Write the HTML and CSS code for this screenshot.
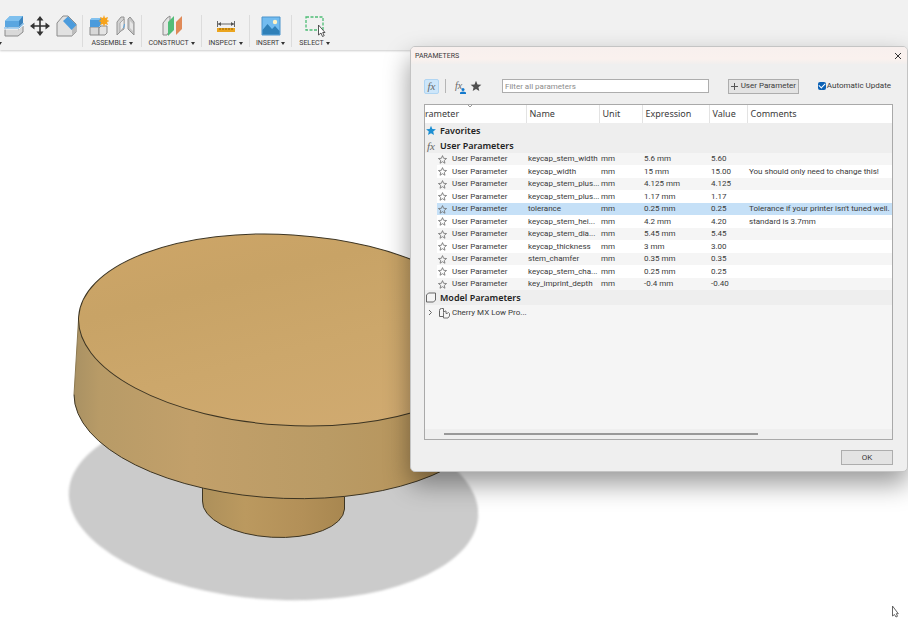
FILE: index.html
```html
<!DOCTYPE html>
<html lang="en">
<head>
<meta charset="utf-8">
<title>Parameters</title>
<link rel="stylesheet" href="styles.css">
</head>
<body>
<svg width="0" height="0" class="defs" aria-hidden="true">
  <symbol id="star" viewBox="0 0 12 12"><path d="M6 .8 7.5 4.4 11.4 4.7 8.4 7.2 9.3 11 6 8.9 2.7 11 3.6 7.2 .6 4.7 4.5 4.4Z"/></symbol>
</svg>

<header class="ribbon">
  <section class="group modify">
    <div class="icons">
      <svg width="20" height="22" viewBox="0 0 20 22"><path d="M1 14 6 11H19V17L14 21H1Z" fill="#d9d9d9" stroke="#8b8b8b"/><path d="M14 15 19 11" stroke="#8b8b8b"/><path d="M1 6 6 1H19V8L15 12H1Z" fill="#5aa6e0"/><path d="M1 6 6 1H19L15 6Z" fill="#7fc0ee"/><path d="M15 6 19 1V8L15 12Z" fill="#3d84bd"/><path d="M0 13.500H15L20 9" fill="none" stroke="#fff" stroke-width="2"/><path d="M0 13H15L20 8.500" fill="none" stroke="#5aa6e0"/></svg>
      <svg width="20" height="20" viewBox="0 0 20 20"><path d="M10 3V17M3 10H17" stroke="#333" stroke-width="1.600"/><path d="M10 0 13.500 4.500H6.500ZM10 20 13.500 15.500H6.500ZM0 10 4.500 6.500V13.500ZM20 10 15.500 6.500V13.500Z" fill="#333"/></svg>
      <svg width="22" height="22" viewBox="0 0 22 22"><path d="M1 8 7 1H12L20 9V17L16 21H1Z" fill="#e1e1e1" stroke="#8b8b8b"/><path d="M16 14V21L20 17V10Z" fill="#bcbcbc"/><path d="M7 6 12 1.500 20.500 10 15.500 15Z" fill="#4b9bdc"/></svg>
    </div>
    <button class="menu" aria-label="Modify"><i></i></button>
  </section>
  <section class="group">
    <div class="icons wide">
      <svg width="20" height="22" viewBox="0 0 20 22"><path d="M1 12H10V20H1Z" fill="#d8d8d8" stroke="#8b8b8b"/><path d="M10 13 12 11H18V18L16 20H10Z" fill="#e4e4e4" stroke="#8b8b8b"/><path d="M1 5 3 3H12V10L10 12H1Z" fill="#4b9bdc"/><path d="M1 5 3 3H12L10 5Z" fill="#83c2ef"/><path d="M15 0 16 3 19 2 18 5 20.500 6 18 7 19 10 16 9 15 12 14 9 11 10 12 7 9.500 6 12 5 11 2 14 3Z" fill="#f7a31b"/></svg>
      <svg width="20" height="20" viewBox="0 0 20 20"><path d="M1 6 5 1H8V13L5 15 1 19Z" fill="#d2d2d2" stroke="#929292"/><path d="M4 7 8 3V11L4 16Z" fill="#ececec" stroke="#929292" stroke-width=".7"/><path d="M12 3 14 1 18 6V19L14 15 12 13Z" fill="#c6c6c6" stroke="#929292"/><path d="M14 5 17 8V15L14 12Z" fill="#e6e6e6"/><path d="M8.500 8 7.500 12" stroke="#5aa6e0"/></svg>
    </div>
    <button class="menu">ASSEMBLE<i></i></button>
  </section>
  <section class="group">
    <div class="icons">
      <svg width="20" height="22" viewBox="0 0 20 22"><path d="M1 8 5 3 8 1V15L5 20H1Z" fill="#e5e5e5" stroke="#8d8d8d"/><path d="M6 7 12 1V15L6 21Z" fill="#52bd78"/><path d="M14 7 20 1V14L14 20Z" fill="#e08a58"/></svg>
    </div>
    <button class="menu">CONSTRUCT<i></i></button>
  </section>
  <section class="group">
    <div class="icons">
      <svg width="20" height="14" viewBox="0 0 20 14"><path d="M1.500 2V8M18.500 2V8M2 5H18" stroke="#666" fill="none"/><path d="M2 5 5 3V7ZM18 5 15 3V7Z" fill="#555"/><path d="M1 9H19V13H1Z" fill="#eba51f"/><path d="M4 9V11M7 9V11M10 9V11M13 9V11M16 9V11" stroke="#966000"/></svg>
    </div>
    <button class="menu">INSPECT<i></i></button>
  </section>
  <section class="group">
    <div class="icons">
      <svg width="20" height="20" viewBox="0 0 20 20"><path d="M1 1H19V19H1Z" fill="#72bcf0" stroke="#4a93cb"/><path d="M1.500 14 6.500 8 11 13 14 10 18.500 15V18.500H1.500Z" fill="#2f80b8"/><circle cx="14" cy="6" r="2.200" fill="#fff3c4"/></svg>
    </div>
    <button class="menu">INSERT<i></i></button>
  </section>
  <section class="group last">
    <div class="icons">
      <svg width="22" height="22" viewBox="0 0 22 22"><path d="M2 2H19V15H2Z" fill="none" stroke="#4dbd76" stroke-width="1.300" stroke-dasharray="3 1.500"/><path d="M14.500 10V20L17 18 18.500 21.500 20.200 20.700 18.700 17.500H21Z" fill="#fff" stroke="#444" stroke-width=".9"/></svg>
    </div>
    <button class="menu">SELECT<i></i></button>
  </section>
</header>

<main class="viewport">
  <svg class="model" viewBox="0 50 908 575">
    <defs>
      <linearGradient id="top" x1="0" y1="0" x2=".7" y2="1"><stop offset="0" stop-color="#cfa668"/><stop offset=".35" stop-color="#c8a366"/><stop offset=".65" stop-color="#cca76b"/><stop offset="1" stop-color="#d0aa70"/></linearGradient>
      <linearGradient id="side" x1="0" x2="1"><stop offset="0" stop-color="#a99163"/><stop offset=".06" stop-color="#b89b67"/><stop offset=".28" stop-color="#c2a06a"/><stop offset=".6" stop-color="#ba9b65"/><stop offset=".85" stop-color="#b6945b"/><stop offset="1" stop-color="#a8864d"/></linearGradient>
      <linearGradient id="stem" x1="0" x2="1"><stop offset="0" stop-color="#ad905b"/><stop offset=".3" stop-color="#bb995f"/><stop offset=".7" stop-color="#b39058"/><stop offset="1" stop-color="#a88750"/></linearGradient>
      <filter id="soft"><feGaussianBlur stdDeviation="1"/></filter>
    </defs>
    <ellipse cx="273.500" cy="504" rx="205" ry="95.500" transform="rotate(3.600 273.500 504)" fill="#cbcbcb" filter="url(#soft)"/>
    <path d="M202.500 470V501A70 31.800 3.250 0 0 344.500 509V470Z" fill="url(#stem)"/>
    <path d="M202.500 486V501A70 31.800 3.250 0 0 344.500 509V490" fill="none" stroke="#3d3523"/>
    <path d="M78.500 320 74 394.600A200 91.700 2.540 0 0 493.800 409.400L495.500 340Z" fill="url(#side)"/>
    <path d="M78.500 320 74 394.600" stroke="#8d7a52"/>
    <path d="M74 394.600A200 91.700 2.540 0 0 493.800 409.400" fill="none" stroke="#3d3523"/>
    <ellipse cx="287" cy="330" rx="208.800" ry="95.300" transform="rotate(3.560 287 330)" fill="url(#top)" stroke="#3d3523"/>
    <path d="M892.500 606V616L894.500 614.500 896 617 897.500 616.300 896.300 613.700H898.300Z" fill="#fff" stroke="#555" stroke-width=".9"/>
  </svg>
</main>

<div class="dialog" role="dialog" aria-labelledby="dialog-title">
  <div class="titlebar">
    <h1 id="dialog-title">PARAMETERS</h1>
    <button class="close" aria-label="Close"><svg width="8" height="8" viewBox="0 0 8 8"><path d="M1 1 7 7M7 1 1 7" stroke="#333"/></svg></button>
  </div>
  <div class="tools">
    <button class="tool on"><span class="fx">fx</span></button>
    <span class="rule"></span>
    <button class="tool user"><span class="fx">fx</span><svg width="6" height="6" viewBox="0 0 6 6"><circle cx="3" cy="1.500" r="1.500"/><path d="M0 6V5Q0 3.500 3 3.500T6 5V6Z"/></svg></button>
    <button class="tool" aria-label="Favorites"><svg width="12" height="12" fill="#505050"><use href="#star"/></svg></button>
    <input class="filter" type="text" placeholder="Filter all parameters" aria-label="Filter all parameters">
    <button class="push add"><svg width="7" height="7" viewBox="0 0 7 7"><path d="M3.500 0V7M0 3.500H7" stroke="#555"/></svg>User Parameter</button>
    <label class="auto"><input type="checkbox" checked>Automatic Update</label>
  </div>
  <div class="list">
    <table>
      <colgroup><col class="c-indent"><col class="c-param"><col class="c-name"><col class="c-unit"><col class="c-expr"><col class="c-value"><col></colgroup>
      <thead>
        <tr><th colspan="2" class="sorted">rameter<svg width="6" height="3" viewBox="0 0 6 3"><path d="M1 0 3 2 5 0" fill="none" stroke="#999"/></svg></th><th>Name</th><th>Unit</th><th>Expression</th><th>Value</th><th>Comments</th></tr>
      </thead>
      <tbody class="heads">
        <tr><th colspan="7"><span class="cell"><svg width="12" height="11" viewBox="0 0 12 12" fill="#1d8fd2"><use href="#star"/></svg>Favorites</span></th></tr>
        <tr><th colspan="7"><span class="cell"><span class="fx">fx</span>User Parameters</span></th></tr>
      </tbody>
      <tbody class="rows">
        <tr><td></td><td><span class="cell"><svg class="fav" viewBox="0 0 12 12"><use href="#star"/></svg>User Parameter</span></td><td>keycap_stem_width</td><td>mm</td><td>5.6 mm</td><td>5.60</td><td></td></tr>
        <tr><td></td><td><span class="cell"><svg class="fav" viewBox="0 0 12 12"><use href="#star"/></svg>User Parameter</span></td><td>keycap_width</td><td>mm</td><td>15 mm</td><td>15.00</td><td>You should only need to change this!</td></tr>
        <tr><td></td><td><span class="cell"><svg class="fav" viewBox="0 0 12 12"><use href="#star"/></svg>User Parameter</span></td><td>keycap_stem_plus...</td><td>mm</td><td>4.125 mm</td><td>4.125</td><td></td></tr>
        <tr><td></td><td><span class="cell"><svg class="fav" viewBox="0 0 12 12"><use href="#star"/></svg>User Parameter</span></td><td>keycap_stem_plus...</td><td>mm</td><td>1.17 mm</td><td>1.17</td><td></td></tr>
        <tr class="selected"><td></td><td><span class="cell"><svg class="fav" viewBox="0 0 12 12"><use href="#star"/></svg>User Parameter</span></td><td>tolerance</td><td>mm</td><td>0.25 mm</td><td>0.25</td><td>Tolerance if your printer isn't tuned well.</td></tr>
        <tr><td></td><td><span class="cell"><svg class="fav" viewBox="0 0 12 12"><use href="#star"/></svg>User Parameter</span></td><td>keycap_stem_hei...</td><td>mm</td><td>4.2 mm</td><td>4.20</td><td>standard is 3.7mm</td></tr>
        <tr><td></td><td><span class="cell"><svg class="fav" viewBox="0 0 12 12"><use href="#star"/></svg>User Parameter</span></td><td>keycap_stem_dia...</td><td>mm</td><td>5.45 mm</td><td>5.45</td><td></td></tr>
        <tr><td></td><td><span class="cell"><svg class="fav" viewBox="0 0 12 12"><use href="#star"/></svg>User Parameter</span></td><td>keycap_thickness</td><td>mm</td><td>3 mm</td><td>3.00</td><td></td></tr>
        <tr><td></td><td><span class="cell"><svg class="fav" viewBox="0 0 12 12"><use href="#star"/></svg>User Parameter</span></td><td>stem_chamfer</td><td>mm</td><td>0.35 mm</td><td>0.35</td><td></td></tr>
        <tr><td></td><td><span class="cell"><svg class="fav" viewBox="0 0 12 12"><use href="#star"/></svg>User Parameter</span></td><td>keycap_stem_cha...</td><td>mm</td><td>0.25 mm</td><td>0.25</td><td></td></tr>
        <tr><td></td><td><span class="cell"><svg class="fav" viewBox="0 0 12 12"><use href="#star"/></svg>User Parameter</span></td><td>key_imprint_depth</td><td>mm</td><td>-0.4 mm</td><td>-0.40</td><td></td></tr>
      </tbody>
      <tbody class="heads">
        <tr><th colspan="7"><span class="cell"><svg width="12" height="11" viewBox="0 0 12 11"><path d="M1.500 3 3.500 1H10.500V8L8.500 10H1.500Z" fill="#f4f4f4" stroke="#666" stroke-linejoin="round"/></svg>Model Parameters</span></th></tr>
      </tbody>
      <tbody class="tree">
        <tr><td><svg class="twist" width="10" height="7" viewBox="0 0 10 7"><path d="M4 1 6.500 3.500 4 6" fill="none" stroke="#666"/></svg></td><td colspan="6"><span class="cell"><svg width="13" height="12" viewBox="0 0 13 12"><path d="M5 9.500H1.500V3.500Q1.500 1.500 3.500 1.500H5.500V5" fill="none" stroke="#666"/><path d="M5.500 11V5.500L7 4H8V6.500H9L10.500 5.500 11.500 6.500V9L10 11Z" fill="#f5f5f5" stroke="#666" stroke-width=".9"/></svg>Cherry MX Low Pro...</span></td></tr>
      </tbody>
    </table>
    <div class="scroll"><div class="thumb"></div></div>
  </div>
  <div class="footer"><button class="push ok">OK</button></div>
</div>
</body>
</html>
```
FILE: styles.css
```css
* { box-sizing: border-box; }

body {
  margin: 0;
  min-height: 100vh;
  display: flex;
  flex-direction: column;
  position: relative;
  overflow: hidden;
  background: #fff;
  color: #3a3a3a;
  font: 8px/12px Roboto, "Noto Sans", sans-serif;
}

button, input { font: inherit; color: inherit; }
button { padding: 0; border: 0; background: none; }
svg { display: block; flex: none; }
.defs { position: absolute; }

/* Ribbon */
.ribbon {
  display: grid;
  grid-template-columns: 83px 59px 60px 48px 42px 45px;
  height: 50px;
  padding-top: 15px;
  background: #f1f1f1;
  box-shadow: 0 1px 2px #ccc;
}
.group {
  display: flex;
  flex-direction: column;
  align-items: center;
  height: 32px;
  border-right: 1px solid #dcdcdc;
}
.group.last { border-right: 0; }
.icons {
  display: flex;
  flex: none;
  align-items: center;
  justify-content: center;
  gap: 6px;
  height: 22px;
}
.icons.wide { gap: 7px; }
.modify { align-items: flex-start; }
.modify .icons { padding-left: 4px; }
.modify .menu { height: 12px; }
.menu {
  display: flex;
  flex: none;
  align-items: center;
  gap: 2px;
  font-size: 7px;
  line-height: 12px;
}
.menu i {
  border: 2px solid transparent;
  border-top: 3px solid #333;
  border-bottom: 0;
}
.modify .menu i { border-left-width: 0; }

/* Viewport */
.viewport { flex: 1; }
.model { width: 100%; height: auto; }

/* Dialog */
.dialog {
  position: absolute;
  top: 46px;
  right: 0;
  width: 498px;
  border: 1px solid #c4c4c4;
  border-radius: 5px;
  background: #efefef;
  box-shadow: 0 12px 26px rgba(0, 0, 0, .4);
  overflow: hidden;
}
.titlebar {
  display: flex;
  align-items: center;
  justify-content: space-between;
  height: 17px;
  padding: 0 5px 0 4px;
  background: linear-gradient(#f8f0ee, #faf1ee 70%, #f1efee);
}
.titlebar h1 { margin: 0; font-size: 7px; font-weight: 400; }

.tools {
  display: flex;
  align-items: center;
  height: 44px;
  padding: 0 16px 0 13px;
}
.tool {
  display: flex;
  align-items: center;
  justify-content: center;
  width: 15px;
  height: 15px;
}
.tool.on { background: #cde6fa; border: 1px solid #b0d5f2; border-radius: 2px; }
.fx { font: italic 11px/12px "Liberation Serif", serif; color: #666; }
.rule { width: 1px; height: 14px; margin: 0 7px 0 6px; background: #b5b5b5; }
.user .fx { font-size: 10px; }
.user svg { align-self: flex-end; margin-left: -2px; fill: #1379cc; }
.filter {
  flex: 1;
  min-width: 0;
  height: 14px;
  margin-left: 19px;
  padding: 0 2px;
  border: 1px solid #adadad;
  background: #fff;
}
.filter::placeholder { color: #8c8c8c; opacity: 1; }
.push {
  display: flex;
  align-items: center;
  justify-content: center;
  height: 15px;
  border: 1px solid #adadad;
  background: #e3e3e3;
}
.add { width: 71px; gap: 3px; margin: 0 19px; }
.auto { display: flex; align-items: center; gap: 1px; white-space: nowrap; }
.auto input {
  appearance: none;
  display: flex;
  justify-content: center;
  width: 8px;
  height: 8px;
  margin: 0;
  border-radius: 2px;
  background: #0b61b5;
}
.auto input::after {
  content: "";
  width: 3px;
  height: 5px;
  border: solid #fff;
  border-width: 0 1px 1px 0;
  transform: rotate(45deg);
}

/* Parameter list */
.list {
  display: flex;
  flex-direction: column;
  min-height: 336px;
  margin: -4px 14px 0 13px;
  border: 1px solid #a9a9a9;
  background: #f5f5f5;
}
table {
  width: 100%;
  table-layout: fixed;
  border-collapse: collapse;
}
.c-indent { width: 12px; }
.c-param { width: 89px; }
.c-name { width: 73px; }
.c-unit { width: 43px; }
.c-expr { width: 67px; }
.c-value { width: 38px; }
th, td { padding: 0 0 0 3px; text-align: left; white-space: nowrap; }
td { padding-left: 2px; }
td:first-child { padding: 0; }
th { font-family: "Noto Sans", sans-serif; font-size: 9px; }
thead th {
  height: 18px;
  border-right: 1px solid #e3e3e3;
  background: #fff;
  font-weight: 400;
}
thead th:last-child { border-right: 0; }
thead .sorted { position: relative; padding-left: 0; }
.sorted svg { position: absolute; top: 0; left: 42px; }
.cell { display: flex; align-items: center; }
.heads th { height: 15px; padding-left: 0; background: #eee; font-weight: 600; line-height: 13px; color: #222; }
.heads .cell { gap: 3px; }
.heads .fx { width: 12px; text-align: center; font-weight: 400; }
.rows td { height: 12px; }
.rows tr:nth-child(even) td { height: 13px; background: #fff; }
.rows td:nth-child(2), .tree td:nth-child(2) { padding-left: 1px; }
.rows td:first-child, .rows tr:nth-child(even) td:first-child { background: #f5f5f5; }
.rows .selected td:not(:first-child) { background: #c5e0f7; }
.fav {
  width: 9px;
  height: 9px;
  margin-right: 5px;
  fill: none;
  stroke: #666;
  overflow: visible;
}
.tree td { height: 15px; }
.tree .cell { gap: 1px; }
.scroll { height: 10px; margin-top: auto; padding: 4px 0 0 19px; background: #efefef; }
.thumb { width: 70%; height: 2px; background: #999; }

.footer { display: flex; justify-content: flex-end; padding: 10px 14px 6px; }
.ok { width: 52px; }
```
